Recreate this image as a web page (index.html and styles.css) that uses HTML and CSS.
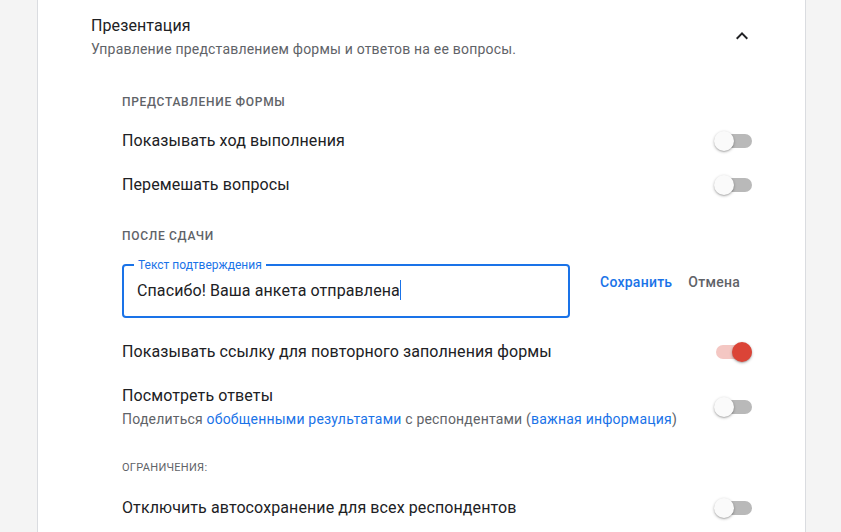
FILE: index.html
```html
<!DOCTYPE html>
<html>
<head>
<meta charset="UTF-8">
<title>Настройки - Презентация</title>
<link rel="stylesheet" href="styles.css">
</head>
<body>
	<div class="card">
		<div class="cardHead">
			<div>
				<div class="cardTitle">Презентация</div>
				<div class="cardSub">Управление представлением формы и ответов на ее вопросы.</div>
			</div>
			<svg class="chevron" viewBox="0 0 24 24" width="24" height="24"><path d="M12 8l-6 6 1.41 1.41L12 10.83l4.59 4.58L18 14z"/></svg>
		</div>

		<div class="settings">
			<div class="groupTitle">Представление формы</div>
			<div class="row">
				<span class="rowLabel">Показывать ход выполнения</span>
				<span class="toggle"><span class="track"></span><span class="thumb"></span></span>
			</div>
			<div class="row">
				<span class="rowLabel">Перемешать вопросы</span>
				<span class="toggle"><span class="track"></span><span class="thumb"></span></span>
			</div>

			<div class="groupTitle groupTitle-second">После сдачи</div>
			<div class="editRow">
				<div class="field">
					<span class="fieldLabel">Текст подтверждения</span>
					<span class="fieldValue">Спасибо! Ваша анкета отправлена<span class="caret"></span></span>
				</div>
				<div class="actions">
					<button class="btn btn-primary">Сохранить</button>
					<button class="btn">Отмена</button>
				</div>
			</div>
			<div class="row row-afterField">
				<span class="rowLabel">Показывать ссылку для повторного заполнения формы</span>
				<span class="toggle on"><span class="track"></span><span class="thumb"></span></span>
			</div>
			<div class="row row-tall">
				<div>
					<div class="rowLabel">Посмотреть ответы</div>
					<div class="rowHint">Поделиться <a href="#">обобщенными результатами</a> с респондентами (<a href="#">важная информация</a>)</div>
				</div>
				<span class="toggle"><span class="track"></span><span class="thumb"></span></span>
			</div>

			<div class="groupTitle groupTitle-light">Ограничения:</div>
			<div class="row">
				<span class="rowLabel">Отключить автосохранение для всех респондентов</span>
				<span class="toggle"><span class="track"></span><span class="thumb"></span></span>
			</div>
		</div>
	</div>
</body>
</html>
```

FILE: styles.css
```css
html, body {
	margin: 0;
	height: 100%;
}

body {
	background-color: #f4f4f4;
	font-family: Roboto, "Liberation Sans", Arial, sans-serif;
	color: #202124;
	overflow: hidden;
}

.card {
	margin: 0 35px 0 37px;
	min-height: 100%;
	background-color: #fff;
	border-left: 1px solid #dadce0;
	border-right: 1px solid #dadce0;
}

.cardHead {
	display: flex;
	justify-content: space-between;
	align-items: flex-start;
	padding: 14px 57px 0 53px;
}

.cardTitle {
	font-size: 16px;
	line-height: 24px;
	letter-spacing: .1px;
}

.cardSub {
	font-size: 14px;
	line-height: 20px;
	letter-spacing: .2px;
	color: #5f6368;
	margin-top: 1px;
}

.chevron {
	fill: #202124;
	margin-top: 10px;
	margin-right: -6px;
}

.settings {
	padding: 35px 53px 0 84px;
}

.groupTitle {
	font-size: 12px;
	line-height: 16px;
	font-weight: 500;
	letter-spacing: .7px;
	text-transform: uppercase;
	color: #5f6368;
	margin-bottom: 9px;
}

.groupTitle-second {
	margin-top: 21px;
	margin-bottom: 20px;
}

.groupTitle-light {
	font-size: 11px;
	font-weight: 400;
	letter-spacing: .3px;
	margin-top: 21px;
	margin-bottom: 10px;
}

.row {
	display: flex;
	justify-content: space-between;
	align-items: center;
	min-height: 44px;
}

.row-afterField {
	margin-top: 12px;
}

.row-tall {
	padding: 10px 0 10px;
}

.rowLabel {
	font-size: 16px;
	line-height: 24px;
	letter-spacing: .1px;
}

.rowHint {
	font-size: 14px;
	line-height: 20px;
	letter-spacing: .2px;
	color: #5f6368;
	margin-top: 1px;
}

.rowHint a {
	color: #1a73e8;
	text-decoration: none;
}

/* переключатель */
.toggle {
	position: relative;
	display: block;
	width: 38px;
	height: 20px;
	flex-shrink: 0;
}

.toggle .track {
	position: absolute;
	left: 2px;
	top: 3px;
	width: 36px;
	height: 14px;
	border-radius: 7px;
	background-color: #b9b9b9;
}

.toggle .thumb {
	position: absolute;
	left: 0;
	top: 0;
	width: 20px;
	height: 20px;
	border-radius: 50%;
	background-color: #fafafa;
	box-shadow: 0 1px 3px rgba(0, 0, 0, .3), 0 1px 1px rgba(0, 0, 0, .1);
}

.toggle.on .track {
	background-color: #f4c7c3;
}

.toggle.on .thumb {
	left: 18px;
	background-color: #db4437;
}

/* поле ввода */
.editRow {
	display: flex;
	align-items: flex-start;
}

.field {
	position: relative;
	box-sizing: border-box;
	width: 448px;
	height: 54px;
	border: 2px solid #1a73e8;
	border-radius: 4px;
	display: flex;
	align-items: center;
	padding-left: 13px;
}

.fieldLabel {
	position: absolute;
	left: 10px;
	top: -9px;
	padding: 0 4px;
	background-color: #fff;
	font-size: 12px;
	line-height: 16px;
	color: #1a73e8;
}

.fieldValue {
	font-size: 16px;
	line-height: 24px;
	letter-spacing: .1px;
	color: #202124;
}

.caret {
	display: inline-block;
	width: 1px;
	height: 20px;
	background-color: #1a73e8;
	vertical-align: -4px;
}

.actions {
	display: flex;
	margin-left: 22px;
}

.btn {
	font-family: inherit;
	font-size: 14px;
	font-weight: 500;
	letter-spacing: .25px;
	height: 36px;
	padding: 0 8px;
	border: none;
	background: none;
	color: #5f6368;
	cursor: pointer;
}

.btn-primary {
	color: #1a73e8;
}
```
